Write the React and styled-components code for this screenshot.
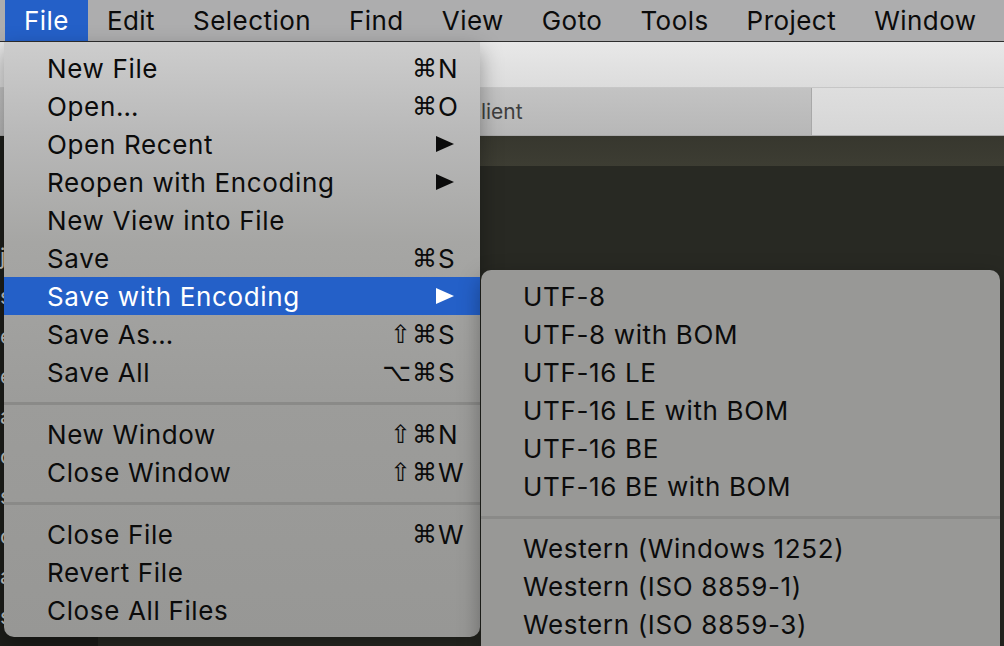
import React from "react";
import styled, { createGlobalStyle } from "styled-components";

const GlobalStyle = createGlobalStyle`
  html, body {
    margin: 0;
    padding: 0;
    width: 1004px;
    height: 646px;
    overflow: hidden;
    background: #272822;
  }
  body {
    font-family: Inter, "Noto Sans", "DejaVu Sans", sans-serif;
  }
`;

const Screen = styled.div`
  position: relative;
  width: 1004px;
  height: 646px;
  overflow: hidden;
  display: flex;
  flex-direction: column;
`;

// top menu bar
const MenuBar = styled.div`
  height: 41px;
  flex: 0 0 41px;
  display: flex;
  align-items: stretch;
  padding-left: 5px;
  background: #adadae;
  border-bottom: 1px solid #2e2e2e;
`;

const BarItem = styled.div`
  display: flex;
  align-items: center;
  padding: 0 19px;
  font-size: 26px;
  letter-spacing: 0.45px;
  color: ${(p) => (p.active ? "#fff" : "#0b0b0b")};
  background: ${(p) => (p.active ? "#2460c8" : "transparent")};
  white-space: nowrap;
`;

// window behind the menus
const Toolbar = styled.div`
  flex: 0 0 45px;
  background: linear-gradient(#e8e8e8, #dcdcdc);
  border-bottom: 1px solid #c6c6c6;
`;

const TabBar = styled.div`
  flex: 0 0 47px;
  display: flex;
  border-bottom: 1px solid #a9a9a9;
`;

const Tab = styled.div`
  flex: ${(p) => (p.grow ? "1 1 auto" : "0 0 811px")};
  display: flex;
  align-items: center;
  justify-content: center;
  font-size: 21px;
  color: #3e3e3e;
  background: ${(p) =>
    p.grow ? "linear-gradient(#dedede, #d6d6d6)" : "linear-gradient(#c3c3c3, #b7b7b7)"};
  border-right: ${(p) => (p.grow ? "none" : "1px solid #a8a8a8")};
`;

const TabLabel = styled.span`
  padding-left: 64px;
`;

const Editor = styled.div`
  flex: 1 1 auto;
  display: flex;
`;

const Sidebar = styled.div`
  flex: 0 0 98px;
  background: #1d1e1a;
  padding-top: 100px;
  display: flex;
  flex-direction: column;
  overflow: hidden;
`;

const SideFile = styled.div`
  height: 40px;
  line-height: 40px;
  font-size: 22px;
  color: #c9c9c6;
  white-space: nowrap;
  padding-left: 0;
`;

const Code = styled.div`
  flex: 1 1 auto;
  display: flex;
  flex-direction: column;
  background: #282923;
`;

const CodeTabs = styled.div`
  flex: 0 0 30px;
  background: linear-gradient(#37372e, #3d3d33);
`;

// dropdown menus
const Menu = styled.div`
  position: absolute;
  left: 4px;
  top: 42px;
  width: 476px;
  padding: 7px 0 8px;
  border-radius: 0 0 10px 10px;
  background: linear-gradient(
    #cdcdcd 0px,
    #b9b9b9 90px,
    #a6a6a4 200px,
    #9c9c9a 360px,
    #979795 100%
  );
  box-shadow: 0 8px 22px rgba(0, 0, 0, 0.35);
  font-size: 26px;
  letter-spacing: 0.65px;
  color: #0b0b0b;
  z-index: 2;
`;

const SubMenu = styled.div`
  position: absolute;
  left: 477px;
  top: 228px;
  width: 519px;
  height: 420px;
  padding-top: 7px;
  border-radius: 10px 10px 0 0;
  background: #989896;
  box-shadow: 0 8px 22px rgba(0, 0, 0, 0.35);
`;

const Row = styled.div`
  height: 38px;
  display: grid;
  grid-template-columns: 1fr auto 42px;
  align-items: center;
  padding-left: ${(p) => (p.sub ? "42px" : "43px")};
  white-space: nowrap;
  background: ${(p) => (p.active ? "#2460c8" : "transparent")};
  color: ${(p) => (p.active ? "#fff" : "inherit")};
`;

const Mods = styled.span`
  text-align: right;
  font-family: "DejaVu Sans", sans-serif;
  font-size: 25px;
  letter-spacing: 1px;
`;

const Key = styled.span`
  text-align: left;
`;

const Separator = styled.div`
  height: 24px;
  display: flex;
  align-items: center;
  &::after {
    content: "";
    flex: 1;
    height: 3px;
    background: #8a8a88;
  }
`;

const Arrow = ({ color }) => (
  <svg width="18" height="16" viewBox="0 0 18 16" style={{ display: "block", marginLeft: -2 }}>
    <polygon points="0,0 18,8 0,16" fill={color} />
  </svg>
);

const Item = ({ label, mods, k, arrow, active, sub }) => (
  <Row active={active} sub={sub}>
    <span>{label}</span>
    <Mods>{mods}</Mods>
    <Key>{arrow ? <Arrow color={active ? "#fff" : "#0b0b0b"} /> : k}</Key>
  </Row>
);

const barItems = ["File", "Edit", "Selection", "Find", "View", "Goto", "Tools", "Project", "Window"];

const sideFiles = ["j", "s", "e", "e", "a", "o", "s", "o", "a", "s"];

export default function App() {
  return (
    <>
      <GlobalStyle />
      <Screen>
        <MenuBar>
          {barItems.map((b, i) => (
            <BarItem key={b} active={i === 0}>
              {b}
            </BarItem>
          ))}
        </MenuBar>
        <Toolbar />
        <TabBar>
          <Tab>
            <TabLabel>tcp_socket_client</TabLabel>
          </Tab>
          <Tab grow />
        </TabBar>
        <Editor>
          <Sidebar>
            {sideFiles.map((f, i) => (
              <SideFile key={i}>{f}</SideFile>
            ))}
          </Sidebar>
          <Code>
            <CodeTabs />
          </Code>
        </Editor>

        <Menu>
          <Item label="New File" mods="⌘" k="N" />
          <Item label="Open…" mods="⌘" k="O" />
          <Item label="Open Recent" arrow />
          <Item label="Reopen with Encoding" arrow />
          <Item label="New View into File" />
          <Item label="Save" mods="⌘" k="S" />
          <Item label="Save with Encoding" arrow active />
          <Item label="Save As…" mods="⇧⌘" k="S" />
          <Item label="Save All" mods="⌥⌘" k="S" />
          <Separator />
          <Item label="New Window" mods="⇧⌘" k="N" />
          <Item label="Close Window" mods="⇧⌘" k="W" />
          <Separator />
          <Item label="Close File" mods="⌘" k="W" />
          <Item label="Revert File" />
          <Item label="Close All Files" />

          <SubMenu>
            <Item sub label="UTF-8" />
            <Item sub label="UTF-8 with BOM" />
            <Item sub label="UTF-16 LE" />
            <Item sub label="UTF-16 LE with BOM" />
            <Item sub label="UTF-16 BE" />
            <Item sub label="UTF-16 BE with BOM" />
            <Separator />
            <Item sub label="Western (Windows 1252)" />
            <Item sub label="Western (ISO 8859-1)" />
            <Item sub label="Western (ISO 8859-3)" />
          </SubMenu>
        </Menu>
      </Screen>
    </>
  );
}
